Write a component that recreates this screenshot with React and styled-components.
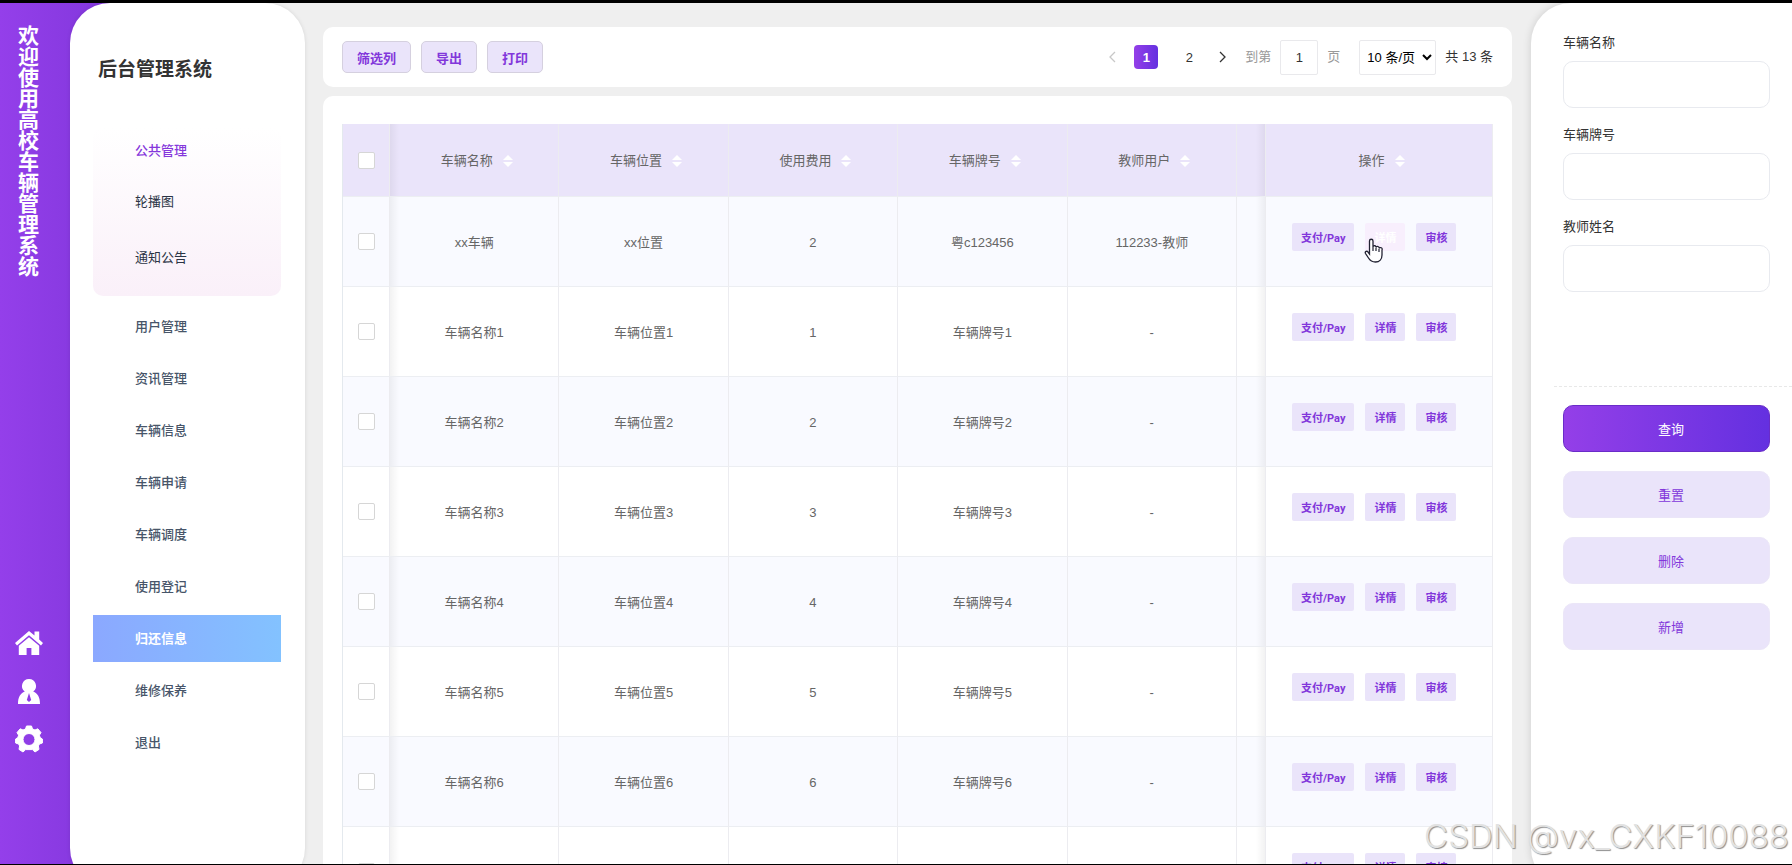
import React, {useState} from "react";
import styled, {createGlobalStyle, css} from "styled-components";

const GlobalStyle = createGlobalStyle`
  *, *::before, *::after {
    box-sizing: border-box;
  }
  body {
    margin: 0;
    font-family: "Liberation Sans", "Noto Sans CJK SC", sans-serif;
    font-size: 13px;
    line-height: 20px;
    color: #666666;
  }
  button, input, select {
    margin: 0;
    font-family: inherit;
    font-size: inherit;
  }
`
const Page = styled.div`
  position: relative;
  display: flex;
  height: 100vh;
  overflow: hidden;

  border-top: 3px solid #000000;
  border-bottom: 1px solid #000000;
  background-color: #EFEFEF;
`
const Rail = styled.aside`
  flex: none;
  display: flex;
  flex-direction: column;
  align-items: center;
  justify-content: space-between;
  width: 110px;
  margin-right: -40px;
  padding: 22px 53px 111px 0;

  background: linear-gradient(to right, #943FEA, #8237DC);
`
const RailTitle = styled.h1`
  margin: 0;
  writing-mode: vertical-rl;
  font-family: "Noto Sans CJK SC", sans-serif;
  font-size: 21px;
  line-height: 24px;
  font-weight: 700;
  white-space: nowrap;
  color: #FFFFFF;
`
const RailNav = styled.nav`
  display: flex;
  flex-direction: column;
  gap: 20px;
`
const RailLink = styled.a`
  display: block;
  width: 28px;
  height: 28px;
  color: #FFFFFF;

  svg {
    display: block;
    width: 28px;
    height: 28px;
    fill: currentColor;
  }
`
const Sidebar = styled.aside`
  position: relative;
  flex: none;
  width: 235px;
  height: calc(100% + 24px);
  padding: 53px 24px 0 23px;

  border-radius: 40px;
  background-color: #FFFFFF;
  box-shadow: 0 0 4px rgba(0, 0, 0, 0.1);
`
const SidebarTitle = styled.h2`
  margin: 0 0 43px 5px;
  font-size: 19px;
  line-height: 28px;
  font-weight: 700;
  color: #333333;
`
const Menu = styled.nav`
  display: flex;
  flex-direction: column;
  gap: 5px;
`
const MenuGroup = styled.div`
  display: flex;
  flex-direction: column;
  margin-bottom: 2px;
  padding-bottom: 10px;

  border-radius: 10px;
  background: linear-gradient(to bottom, #FFFFFF, #FAF0F9);
`
const MenuLink = styled.a`
  display: flex;
  align-items: center;
  height: ${p => p.$sub ? "56px" : "47px"};
  padding-left: 42px;

  font-size: 13px;
  font-weight: ${p => p.$sub ? 400 : 500};
  text-decoration: none;
  color: ${p => p.$sub ? "#2B3445" : "#475569"};
  ${p => p.$open && css`
    color: #8537DB;
  `}
  ${p => p.$active && css`
    font-weight: 700;
    color: #FFFFFF;
    background: linear-gradient(to right, #8BA8FF, #83C2FF);
  `}
`
const Content = styled.main`
  flex: 1;
  min-width: 0;
  display: flex;
  flex-direction: column;
  gap: 9px;
  padding: 24px 19px 0 18px;
`
const Card = styled.section`
  border-radius: 10px;
  background-color: #FFFFFF;
`
const Toolbar = styled(Card)`
  flex: none;
  display: flex;
  align-items: center;
  justify-content: space-between;
  height: 60px;
  padding: 0 19px;
`
const TableCard = styled(Card)`
  flex: none;
  padding: 28px 19px;
`
const ToolGroup = styled.div`
  display: flex;
  gap: 10px;
`
const ToolButton = styled.button`
  height: 32px;
  padding: 0 14px;

  font-weight: 700;
  color: #8237DB;
  border: 1px solid #D5D0DF;
  border-radius: 5px;
  background-color: #EAE4FA;
`
const Pager = styled.div`
  display: flex;
  align-items: center;
  color: #333333;
`
const PageButton = styled.button`
  display: flex;
  align-items: center;
  justify-content: center;
  width: 24px;
  height: 24px;
  margin-left: ${p => p.$gap || "0"};
  padding: 0;

  color: ${p => p.disabled ? "#C8C8C8" : "#333333"};
  border: none;
  border-radius: 4px;
  background: none;
  ${p => p.$current && css`
    font-weight: 700;
    color: #FFFFFF;
    background: linear-gradient(to right, #943FE8, #6430E0);
  `}
`
const PagerLabel = styled.label`
  display: flex;
  align-items: center;
  gap: 9px;
  margin-left: 10px;
  color: #999999;
`
const PageInput = styled.input`
  width: 38px;
  height: 35px;
  padding: 0;

  text-align: center;
  color: #333333;
  border: 1px solid #E9E9EC;
  border-radius: 2px;
  background-color: #FFFFFF;
`
const PageSelect = styled.select`
  width: 77px;
  height: 35px;
  margin: 0 9px 0 19px;
  padding: 0 0 0 3px;

  color: #000000;
  border: 1px solid #E9E9EC;
  border-radius: 2px;
  background-color: #FFFFFF;
`
const Table = styled.table`
  width: 100%;
  table-layout: fixed;
  border-collapse: separate;
  border-spacing: 0;
  border-left: 1px solid #E4E9EE;
`
const Col = styled.col`
  width: ${p => p.$width || "auto"};
`
const Cell = styled.td`
  height: 90px;
  padding: 2px 0 0;

  text-align: center;
  border-right: 1px solid #ECECF0;
  border-bottom: 1px solid #ECEEF2;
  ${p => p.$shade === "left" && css`
    background-image: linear-gradient(to right, rgba(0, 0, 0, 0.05), transparent 9px);
  `}
  ${p => p.$shade === "right" && css`
    background-image: linear-gradient(to left, rgba(0, 0, 0, 0.05), transparent 9px);
  `}
`
const HeadCell = styled(Cell)`
  height: 73px;
  font-weight: 400;
  background-color: #EAE4FA;
`
const HeadLabel = styled.span`
  display: inline-flex;
  align-items: center;
  gap: 10px;
  padding-left: 5px;
`
const Row = styled.tr`
  background-color: ${p => p.$odd ? "#F9FAFF" : "#FFFFFF"};
`
const CheckBox = styled.input`
  appearance: none;
  display: block;
  width: 17px;
  height: 17px;
  margin: 0 auto 2px;

  border: 1px solid #D6D6D6;
  border-radius: 2px;
  background-color: #FFFFFF;
  &:checked {
    background-color: #8237DB;
  }
`
const Actions = styled.div`
  display: flex;
  gap: 11px;
  padding: 0 0 11px 26px;
`
const ActionButton = styled.button`
  height: 28px;
  padding: 0 9px;

  font-family: Roboto, "Noto Sans CJK SC", sans-serif;
  font-size: 11px;
  font-weight: 700;
  color: ${p => p.$hovered ? "#FFFFFF" : "#8237DB"};
  border: none;
  border-radius: 2px;
  background-color: ${p => p.$hovered ? "#F8EFFD" : "#EAE4FA"};
`
const Pointer = styled.svg`
  position: absolute;
  left: 1364px;
  top: 235px;
  width: 20px;
  height: 26px;
`
const SearchPanel = styled.aside`
  position: relative;
  flex: none;
  width: 261px;
  height: calc(100% + 24px);
  padding: 30px 0 0 23px;

  border-radius: 40px 0 0 40px;
  background-color: #FFFFFF;
  box-shadow: 0 0 9px rgba(0, 0, 0, 0.14);
`
const SearchForm = styled.form`
  display: flex;
  flex-direction: column;
  gap: 17px;
  padding: 0 22px 94px 9px;
`
const Field = styled.label`
  display: flex;
  flex-direction: column;
  gap: 8px;
  color: #333333;
`
const FieldInput = styled.input`
  width: 100%;
  height: 47px;
  padding: 0 10px;

  border: 1px solid #E8EAEF;
  border-radius: 10px;
  background-color: #FFFFFF;
`
const ButtonList = styled.div`
  display: flex;
  flex-direction: column;
  gap: 19px;
  padding: 18px 22px 0 9px;
  border-top: 1px dashed #E8E8E8;
`
const PanelButton = styled.button`
  height: 47px;
  padding: 0 0 0 9px;

  color: ${p => p.$primary ? "#FFFFFF" : "#8237DB"};
  border: 1px solid ${p => p.$primary ? "#6A2CC8" : "#EBE6F8"};
  border-radius: 10px;
  background: ${p => p.$primary ? "linear-gradient(to right, #943FE8, #6430E0)" : "#EAE4FA"};
`
const Watermark = styled.div`
  position: absolute;
  right: 3px;
  bottom: 8px;

  font-family: Inter, "Open Sans", sans-serif;
  font-size: 33px;
  line-height: 40px;
  font-weight: 300;
  color: #E2E2E2;
  text-shadow: 1px 1px 1px #8F8F8F;
  white-space: nowrap;
`

const menu = ["用户管理", "资讯管理", "车辆信息", "车辆申请", "车辆调度", "使用登记", "归还信息", "维修保养", "退出"]
const columns = ["车辆名称", "车辆位置", "使用费用", "车辆牌号", "教师用户"]
const rows = [["xx车辆", "xx位置", "2", "粤c123456", "112233-教师"]]
for (let i = 1; i <= 9; i++) {
    rows.push([`车辆名称${i}`, `车辆位置${i}`, `${i}`, `车辆牌号${i}`, "-"])
}

let SortMark = () => (
    <svg width="10" height="12" viewBox="0 0 10 12" fill="#FFFFFF" aria-hidden="true">
        <path d="M5 0L10 5H0z"/>
        <path d="M0 7H10L5 12z"/>
    </svg>
)

let Arrow = ({d}) => (
    <svg width="8" height="12" viewBox="0 0 8 12" fill="none" stroke="currentColor" strokeWidth="1.3" aria-hidden="true">
        <path d={d}/>
    </svg>
)

let App = () => {
    const [active, setActive] = useState("归还信息")
    const [page, setPage] = useState("1")

    return (
        <Page>
            <GlobalStyle/>
            <Rail>
                <RailTitle>欢迎使用高校车辆管理系统</RailTitle>
                <RailNav>
                    <RailLink href="#home" aria-label="首页">
                        <svg viewBox="0 0 28 28">
                            <path d="M14 2L0 14L2 16.4L14 6.2L26 16.4L28 14L24.2 10.6V2.5H19.5V6.6z"/>
                            <path d="M14 8.2L3.8 16.8V26H11.6V19H16.4V26H24.2V16.8z"/>
                        </svg>
                    </RailLink>
                    <RailLink href="#user" aria-label="用户">
                        <svg viewBox="0 0 28 28">
                            <path fillRule="evenodd" d="M14 2A7 7 0 0 0 9.8 14.6C5.4 16.6 3 20 3 27H25C25 20 22.6 16.6 18.2 14.6A7 7 0 0 0 14 2zM14 16L16.2 23L14 25L11.8 23z"/>
                        </svg>
                    </RailLink>
                    <RailLink href="#settings" aria-label="设置">
                        <svg viewBox="0 0 28 28">
                            <path
                                fillRule="evenodd"
                                strokeLinejoin="round"
                                stroke="currentColor"
                                d="M11.5 1H16.5L17.5 4L20 5L22.8 3.8L26 7.6L24.4 10.2L25.2 12.6L27.4 14V18L24.4 19L23.4 21L24 24.4L20 27L17.4 24.6H10.6L8 27L4 24.4L4.6 21L3.6 19L.6 18V14L2.800 12.600L3.600 10.200L2 7.600L5.200 3.800L8 5L10.500 4zM14 8.500A6 6 0 1 0 14 20.500A6 6 0 1 0 14 8.500z"
                            />
                        </svg>
                    </RailLink>
                </RailNav>
            </Rail>
            <Sidebar>
                <SidebarTitle>后台管理系统</SidebarTitle>
                <Menu>
                    <MenuGroup>
                        <MenuLink href="#public" $open>公共管理</MenuLink>
                        <MenuLink href="#banner" $sub>轮播图</MenuLink>
                        <MenuLink href="#notice" $sub>通知公告</MenuLink>
                    </MenuGroup>
                    {menu.map(m => (
                        <MenuLink href="#menu" key={m} $active={m === active} onClick={() => setActive(m)}>{m}</MenuLink>
                    ))}
                </Menu>
            </Sidebar>
            <Content>
                <Toolbar>
                    <ToolGroup>
                        <ToolButton>筛选列</ToolButton>
                        <ToolButton>导出</ToolButton>
                        <ToolButton>打印</ToolButton>
                    </ToolGroup>
                    <Pager>
                        <PageButton disabled aria-label="上一页"><Arrow d="M7 1L2 6L7 11"/></PageButton>
                        <PageButton $current $gap="10px">1</PageButton>
                        <PageButton $gap="19px">2</PageButton>
                        <PageButton $gap="10px" aria-label="下一页"><Arrow d="M1 1L6 6L1 11"/></PageButton>
                        <PagerLabel>
                            到第
                            <PageInput value={page} onChange={e => setPage(e.target.value)}/>
                            页
                        </PagerLabel>
                        <PageSelect aria-label="每页条数">
                            <option>10 条/页</option>
                            <option>20 条/页</option>
                        </PageSelect>
                        <span>共 13 条</span>
                    </Pager>
                </Toolbar>
                <TableCard>
                    <Table>
                        <colgroup>
                            <Col $width="47px"/>
                            {columns.map(c => <Col key={c}/>)}
                            <Col $width="29px"/>
                            <Col $width="227px"/>
                        </colgroup>
                        <thead>
                            <tr>
                                <HeadCell as="th"><CheckBox type="checkbox" aria-label="全选"/></HeadCell>
                                {columns.map((c, i) => (
                                    <HeadCell as="th" key={c} $shade={i === 0 ? "left" : ""}>
                                        <HeadLabel>{c}<SortMark/></HeadLabel>
                                    </HeadCell>
                                ))}
                                <HeadCell as="th" $shade="right"/>
                                <HeadCell as="th"><HeadLabel>操作<SortMark/></HeadLabel></HeadCell>
                            </tr>
                        </thead>
                        <tbody>
                            {rows.map((r, n) => (
                                <Row key={r[0]} $odd={n % 2 === 0}>
                                    <Cell><CheckBox type="checkbox" aria-label={r[0]}/></Cell>
                                    {r.map((v, i) => (
                                        <Cell key={i} $shade={i === 0 ? "left" : ""}>{v}</Cell>
                                    ))}
                                    <Cell $shade="right"/>
                                    <Cell>
                                        <Actions>
                                            <ActionButton>支付/Pay</ActionButton>
                                            <ActionButton $hovered={n === 0}>详情</ActionButton>
                                            <ActionButton>审核</ActionButton>
                                        </Actions>
                                    </Cell>
                                </Row>
                            ))}
                        </tbody>
                    </Table>
                </TableCard>
            </Content>
            <SearchPanel>
                <SearchForm>
                    <Field>车辆名称<FieldInput type="text"/></Field>
                    <Field>车辆牌号<FieldInput type="text"/></Field>
                    <Field>教师姓名<FieldInput type="text"/></Field>
                </SearchForm>
                <ButtonList>
                    <PanelButton $primary>查询</PanelButton>
                    <PanelButton>重置</PanelButton>
                    <PanelButton>删除</PanelButton>
                    <PanelButton>新增</PanelButton>
                </ButtonList>
            </SearchPanel>
            <Pointer viewBox="0 0 20 26" aria-hidden="true">
                <path d="M5.500 3A1.700 1.700 0 0 1 9 3V9A1.500 1.500 0 0 1 12 9.500A1.500 1.500 0 0 1 15 10.500A1.500 1.500 0 0 1 18 12V17C18 21 15.500 24 11.500 24C7.500 24 6 22.500 4.500 20L1.500 15.500C.5 13.500 3 12.500 4 14L5.500 16z" fill="#FFFFFF" stroke="#222233" strokeWidth="1.300"/>
                <path d="M9 9V13M12 10V13M15 11V14" stroke="#222233" strokeWidth="1.200"/>
            </Pointer>
            <Watermark>CSDN @vx_CXKF10088</Watermark>
        </Page>
    )
}
export default App;
